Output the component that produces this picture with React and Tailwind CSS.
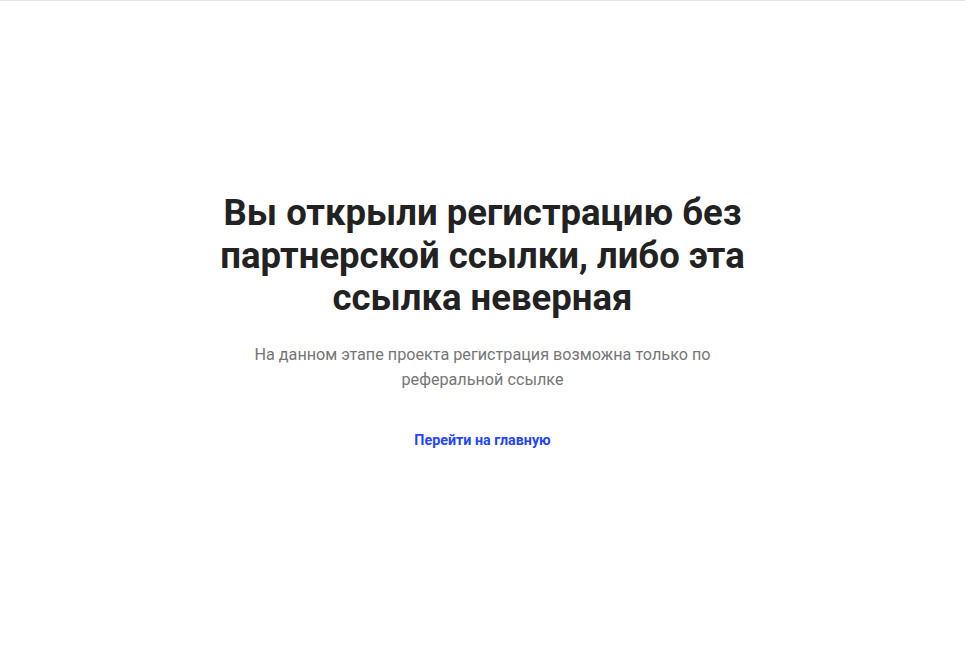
export default function App() {
  return (
    <div
      className="min-h-screen w-full bg-white border-t border-[#e5e5e5] flex items-center justify-center"
      style={{ fontFamily: "Roboto, 'Liberation Sans', sans-serif" }}
    >
      <div className="w-[560px] pb-[5px] flex flex-col items-center text-center">
        <h1 className="text-[36.5px] leading-[42.5px] font-bold text-[#222222]">
          Вы открыли регистрацию без партнерской ссылки, либо эта ссылка неверная
        </h1>
        <p className="mt-[22px] text-[16.2px] leading-[25px] text-[#757575] w-[480px]">
          На данном этапе проекта регистрация возможна только по реферальной ссылке
        </p>
        <a href="#" className="mt-[38px] text-[14.3px] leading-[20px] font-bold text-[#1f45ff]">
          Перейти на главную
        </a>
      </div>
    </div>
  );
}
